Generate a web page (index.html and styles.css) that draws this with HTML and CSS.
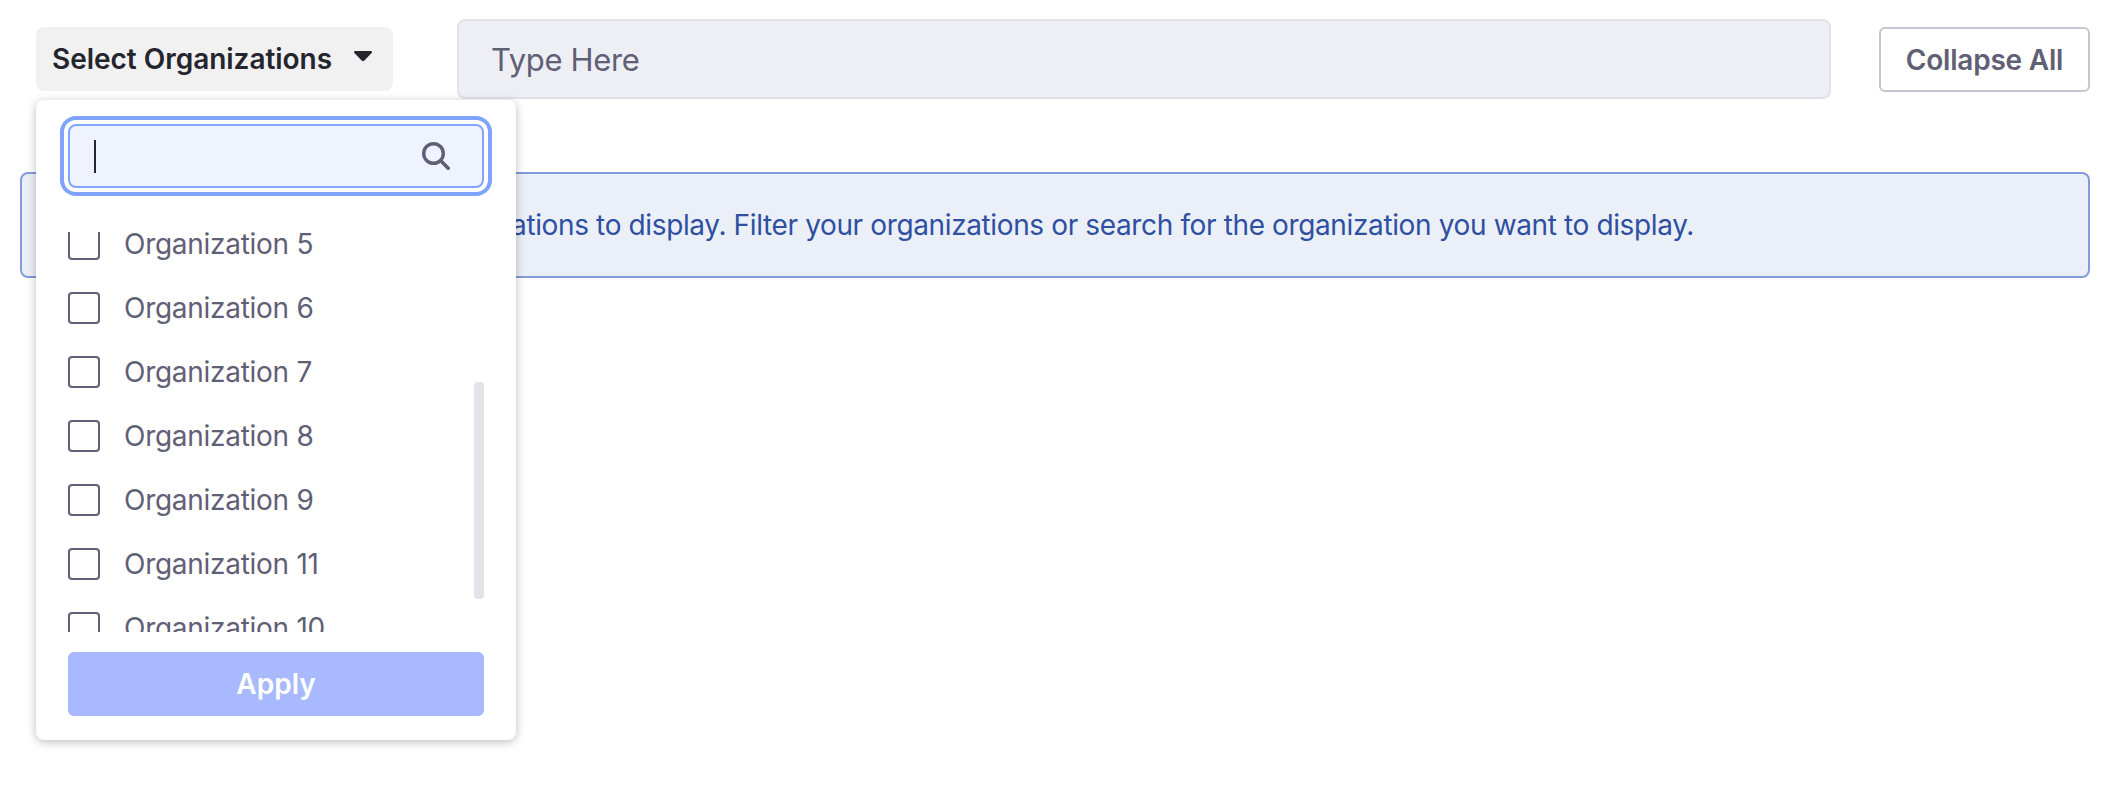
FILE: index.html
```html
<!DOCTYPE html>
<html lang="en">
<head>
<meta charset="utf-8">
<title>Organizations</title>
<link rel="stylesheet" href="styles.css">
</head>
<body>
<main class="page">
  <header class="toolbar">
    <div class="dropdown">
      <button class="toggle" type="button"><span class="toggle-label">Select Organizations</span>
        <svg class="caret" viewBox="0 0 18 10" width="18" height="10"><path d="M1.3 0h15.4c1.200 0 1.700 1.100.900 1.900l-7.200 7.500a2 2 0 0 1-2.800 0L.4 1.900C-.4 1.100.1 0 1.300 0z" fill="currentColor"/></svg>
      </button>
      <section class="menu">
        <div class="search">
          <span class="cursor"></span>
          <svg class="search-icon" viewBox="0 0 28 28" width="28" height="28" fill="none" stroke="currentColor"><circle cx="11.500" cy="11.500" r="9.800" stroke-width="3.400"/><path d="M18.800 18.800l7.400 7.400" stroke-width="3.600" stroke-linecap="round"/></svg>
        </div>
        <div class="list">
          <label class="row"><span class="box"></span><span class="name">Organization 5</span></label>
          <label class="row"><span class="box"></span><span class="name">Organization 6</span></label>
          <label class="row"><span class="box"></span><span class="name">Organization 7</span></label>
          <label class="row"><span class="box"></span><span class="name">Organization 8</span></label>
          <label class="row"><span class="box"></span><span class="name">Organization 9</span></label>
          <label class="row"><span class="box"></span><span class="name">Organization 11</span></label>
          <label class="row"><span class="box"></span><span class="name">Organization 10</span></label>
          <span class="thumb"></span>
        </div>
        <button class="apply" type="button">Apply</button>
      </section>
    </div>
    <div class="field">Type Here</div>
    <button class="collapse" type="button">Collapse All</button>
  </header>
  <div class="alert"><p class="alert-text">No organizations to display. Filter your organizations or search for the organization you want to display.</p></div>
</main>
</body>
</html>
```
FILE: styles.css
```css
* { box-sizing: border-box; }
body {
  margin: 0;
  background: #fff;
  font-family: Inter, "Liberation Sans", sans-serif;
  font-size: 28px;
  line-height: 42px;
  color: #5f6075;
}
button { font: inherit; margin: 0; border: 0; }
.page { min-height: 100vh; padding: 19px 17px 0 20px; }
.toolbar { display: flex; align-items: flex-start; padding-left: 16px; }
.dropdown { position: relative; margin: 8px 64px 0 0; }
.toggle {
  display: flex;
  align-items: center;
  justify-content: space-between;
  width: 357px;
  height: 64px;
  padding: 0 21px 0 16px;
  border-radius: 8px;
  background: #f1f1f1;
  color: #25252e;
  font-weight: 600;
  white-space: nowrap;
}
.toggle-label { letter-spacing: -0.03px; }
.caret { margin-top: -7px; }
.menu {
  position: absolute;
  z-index: 1;
  top: 73px;
  left: 0;
  width: 480px;
  height: 640px;
  padding: 24px 32px;
  border-radius: 8px;
  background: #fff;
  box-shadow: 0 2px 10px rgba(0, 0, 0, .26);
}
.search {
  display: flex;
  align-items: center;
  justify-content: space-between;
  height: 64px;
  padding: 0 32px 0 24px;
  border: 2px solid #80a3ff;
  border-radius: 8px;
  background: #eff3fe;
  box-shadow: 0 0 0 4px #fff, 0 0 0 8px #80a3ff;
}
.cursor { width: 2px; height: 33px; background: #25252e; }
.list {
  position: relative;
  height: 400px;
  margin-top: 44px;
  overflow: hidden;
}
.row { display: flex; align-items: center; gap: 24px; height: 64px; }
.row:first-child { margin-top: -20px; }
.box {
  width: 32px;
  height: 32px;
  border: 2px solid #5f6075;
  border-radius: 4px;
  background: #fff;
}
.name { letter-spacing: -0.28px; }
.thumb {
  position: absolute;
  top: 150px;
  right: 0;
  width: 10px;
  height: 217px;
  border-radius: 4px;
  background: #e2e3e9;
}
.apply {
  width: 100%;
  height: 64px;
  margin-top: 20px;
  border-radius: 6px;
  background: #a8b9ff;
  color: #fff;
  font-weight: 600;
}
.field {
  flex: 1;
  height: 80px;
  padding: 0 32px;
  border: 2px solid #e2e2e8;
  border-radius: 8px;
  background: #eeeff4;
  font-size: 31px;
  line-height: 78px;
  letter-spacing: -0.35px;
}
.collapse {
  width: 211px;
  height: 65px;
  margin: 8px 0 0 48px;
  border: 2px solid #c6c5d3;
  border-radius: 6px;
  background: #fff;
  color: #5f6075;
  font-weight: 600;
  white-space: nowrap;
  letter-spacing: -0.2px;
  padding: 0;
}
.alert {
  display: flex;
  align-items: center;
  justify-content: flex-end;
  height: 106px;
  margin-top: 73px;
  padding-right: 394px;
  border: 2px solid #829bdb;
  border-radius: 8px;
  background: #ebeff8;
  color: #2f50a0;
}
.alert-text { margin: 0; white-space: nowrap; letter-spacing: -0.37px; }
```
